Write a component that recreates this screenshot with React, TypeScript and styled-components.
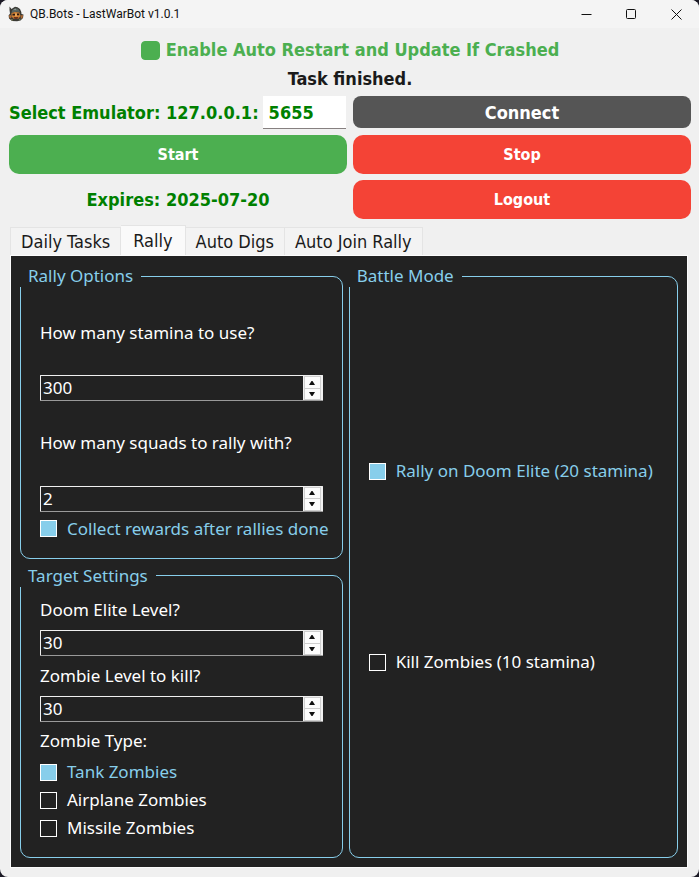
import React, { useId, useState } from "react";
import styled, { createGlobalStyle } from "styled-components";

const GlobalStyle = createGlobalStyle`
  * { box-sizing: border-box; }
  body { margin: 0; background: #1c1a26; }
  body, button, input { font-family: "DejaVu Sans Condensed", "DejaVu Sans", "Noto Sans", sans-serif; }
`;

const Window = styled.div`
  display: flex;
  flex-direction: column;
  min-height: 100vh;
  overflow: hidden;
  border-radius: 8px;
  background: #f0f0f0;
  color: #1a1a1a;
`;

const TitleBar = styled.header`
  display: flex;
  align-items: center;
  height: 28px;
  padding-left: 8px;
  background: #f4f4f4;
`;

const AppTitle = styled.h1`
  flex: 1;
  margin: 0 0 0 6px;
  font-family: Roboto, "Noto Sans", sans-serif;
  font-size: 12px;
  font-weight: 400;
  line-height: 16px;
  color: #111;
`;

const CaptionButton = styled.button`
  display: grid;
  place-items: center;
  width: 45px;
  height: 28px;
  padding: 0;
  border: 0;
  background: transparent;
  color: #111;
`;

const Content = styled.main`
  display: flex;
  flex: 1;
  flex-direction: column;
  gap: 6px;
  padding: 11px 8px 9px 9px;
`;

const RestartOption = styled.label`
  display: flex;
  align-items: center;
  justify-content: center;
  gap: 6px;
  font-size: 18px;
  font-weight: 700;
  line-height: 22px;
  color: #4caf50;
`;

const RestartBox = styled.input`
  appearance: none;
  width: 19px;
  height: 19px;
  margin: 0;
  border: 1px solid #4caf50;
  border-radius: 4px;
  background: #fff;
  &:checked { background: #4caf50; }
`;

const Status = styled.p`
  margin: 0;
  font-size: 18px;
  font-weight: 700;
  line-height: 23px;
  text-align: center;
`;

const Controls = styled.section`
  display: grid;
  grid-template-columns: repeat(2, minmax(0, 1fr));
  gap: 6px;
`;

const Emulator = styled.div`
  display: flex;
  align-items: center;
  gap: 4px;
  font-size: 18px;
  font-weight: 700;
  line-height: 23px;
  white-space: nowrap;
  color: #008000;
`;

const PortInput = styled.input`
  flex: 1;
  min-width: 0;
  height: 33px;
  margin-right: 1px;
  padding: 0 6px;
  border: 0;
  border-bottom: 1px solid #868080;
  background: #fff;
  color: #008000;
  font-size: 18px;
  font-weight: 700;
`;

const tones = { gray: "#555555", green: "#4caf50", red: "#f44336" };

const ActionButton = styled.button<{ $tone: keyof typeof tones; $compact?: boolean }>`
  height: ${(p) => (p.$compact ? 32 : 39)}px;
  padding: 0;
  border: 0;
  border-radius: ${(p) => (p.$compact ? 8 : 10)}px;
  background: ${(p) => tones[p.$tone]};
  color: #fff;
  font-size: ${(p) => (p.$compact ? 18 : 16)}px;
  font-weight: 700;
`;

const Expiry = styled.p`
  align-self: center;
  margin: 0;
  font-size: 18px;
  font-weight: 700;
  line-height: 23px;
  text-align: center;
  color: #008000;
`;

const TabArea = styled.section`
  display: flex;
  flex: 1;
  flex-direction: column;
  padding: 0 3px 0 1px;
`;

const TabList = styled.div`
  display: flex;
  align-items: flex-end;
  height: 30px;
`;

const Tab = styled.button<{ $active: boolean }>`
  height: ${(p) => (p.$active ? 30 : 28)}px;
  padding: ${(p) => (p.$active ? "0 12px" : "0 10px")};
  border: 1px solid #e4e4e4;
  border-bottom: 0;
  background: ${(p) => (p.$active ? "#fafafa" : "#f3f3f3")};
  color: #1a1a1a;
  font-size: 18px;
  line-height: 22px;
  white-space: nowrap;
  & + & { border-left: 0; }
`;

const Pane = styled.div`
  display: grid;
  flex: 1;
  grid-template-columns: 49fr 50fr;
  gap: 6px;
  padding: 9px;
  border: 1px solid #fcfcfc;
  background: #222;
  color: #fff;
  font-family: "Noto Sans", "Open Sans", sans-serif;
  font-size: 17px;
  line-height: 22px;
`;

const Column = styled.div`
  display: flex;
  flex-direction: column;
  gap: 6px;
  min-width: 0;
`;

const Group = styled.fieldset<{ $spread?: boolean }>`
  display: flex;
  flex: 1;
  flex-direction: column;
  justify-content: ${(p) => (p.$spread ? "space-evenly" : "flex-start")};
  gap: ${(p) => (p.$spread ? 0 : 6)}px;
  min-width: 0;
  margin: 0;
  padding: ${(p) => (p.$spread ? "4px 19px 15px" : "10px 19px 18px")};
  border: 1px solid #87ceeb;
  border-radius: 10px;
`;

const GroupTitle = styled.legend`
  margin-left: -20px;
  padding: 0 8px;
  background: #222;
  color: #87ceeb;
`;

const FieldLabel = styled.label`
  display: flex;
  flex: 1;
  align-items: center;
`;

const SpinFrame = styled.div`
  display: flex;
  height: 26px;
  border: 1px solid #f0f0f0;
  border-bottom-color: #9a9a9a;
  border-radius: 1px;
`;

const SpinInput = styled.input`
  flex: 1;
  min-width: 0;
  padding: 0 2px;
  border: 0;
  background: transparent;
  color: #fff;
  font: inherit;
  appearance: textfield;
  &::-webkit-inner-spin-button { appearance: none; margin: 0; }
`;

const SpinButtons = styled.div`
  display: flex;
  flex-direction: column;
  width: 19px;
  padding: 0 1px;
  background: #f0f0f0;
`;

const StepButton = styled.button`
  display: grid;
  flex: 1;
  place-items: center;
  padding: 0;
  border: 1px solid #cfcfcf;
  background: #fdfdfd;
  color: #111;
  & + & { border-top: 0; }
`;

const CheckLabel = styled.label<{ $checked: boolean }>`
  display: flex;
  align-items: center;
  gap: 10px;
  white-space: nowrap;
  color: ${(p) => (p.$checked ? "#87ceeb" : "#fff")};
`;

const CheckBox = styled.input`
  appearance: none;
  flex: none;
  width: 17px;
  height: 17px;
  margin: 0;
  border: 1px solid #fff;
  background: transparent;
  &:checked { background: #87ceeb; }
`;

function HelmetIcon() {
  return (
    <svg width="16" height="16" viewBox="0 0 16 16" aria-hidden="true">
      <path d="M1.500 .5 3.500 3 5 2 7 .8 9.500 1.200 12 3 13.300 6 13.500 8 15.500 8.500 15 12 12.500 14.500 9 15.300 4 15 1 12.500.600 9.500 2 7.500 1.500 4z" fill="#3a3a35" />
      <path d="M4 4.500 7 2.200 10 2.800 12 6 8 5.800 3.500 7z" fill="#59645f" />
      <path d="M5 3.800 7.500 2.600 8.500 4.300z" fill="#8a9490" />
      <path d="M3.500 7 7 6 11.500 6.500 12.500 10 10 13 6 13 3.500 10.500z" fill="#d08236" />
      <path d="M4.500 7.800h2.500v1.600H4.500zM9 7.600h2.200v1.600H9z" fill="#2a1a12" />
      <path d="M7.200 7.500h1.500v2.800H7.200z" fill="#f0b060" />
      <path d="M5.500 11h5l-1 2H6.500z" fill="#6b341c" />
      <path d="M.8 9.500 3 9 3.500 11.500 1.800 12.500zM12.500 9.500l2.500-.5-.5 3-1.500.8z" fill="#b06a34" />
      <path d="M3 13l2 .5v1.200L3 14zM11 13.200l1.500-.7v1.200L11 14.500z" fill="#7c7c50" />
    </svg>
  );
}

function Arrow({ down = false }: { down?: boolean }) {
  return (
    <svg width="6" height="4" viewBox="0 0 6 4" aria-hidden="true">
      <path d={down ? "M0 0H6L3.500 4H2.500z" : "M0 4H6L3.500 0H2.500z"} fill="currentColor" />
    </svg>
  );
}

function Spin({ label, initial }: { label: string; initial: number }) {
  const id = useId();
  const [value, setValue] = useState(initial);
  return (
    <>
      <FieldLabel htmlFor={id}>{label}</FieldLabel>
      <SpinFrame>
        <SpinInput id={id} type="number" value={value} onChange={(e) => setValue(Number(e.target.value))} />
        <SpinButtons>
          <StepButton type="button" aria-label="Increase" onClick={() => setValue(value + 1)}>
            <Arrow />
          </StepButton>
          <StepButton type="button" aria-label="Decrease" onClick={() => setValue(value - 1)}>
            <Arrow down />
          </StepButton>
        </SpinButtons>
      </SpinFrame>
    </>
  );
}

function Check({ label, initial = false }: { label: string; initial?: boolean }) {
  const [checked, setChecked] = useState(initial);
  return (
    <CheckLabel $checked={checked}>
      <CheckBox type="checkbox" checked={checked} onChange={(e) => setChecked(e.target.checked)} />
      {label}
    </CheckLabel>
  );
}

const tabs = ["Daily Tasks", "Rally", "Auto Digs", "Auto Join Rally"];

export default function App() {
  const [active, setActive] = useState("Rally");
  return (
    <>
      <GlobalStyle />
      <Window>
        <TitleBar>
          <HelmetIcon />
          <AppTitle>QB.Bots - LastWarBot v1.0.1</AppTitle>
          <CaptionButton aria-label="Minimize">
            <svg width="11" height="11" viewBox="0 0 11 11"><path d="M.5 5.500h10" stroke="currentColor" /></svg>
          </CaptionButton>
          <CaptionButton aria-label="Maximize">
            <svg width="11" height="11" viewBox="0 0 11 11"><rect x=".5" y=".5" width="9" height="9" rx="1" fill="none" stroke="currentColor" /></svg>
          </CaptionButton>
          <CaptionButton aria-label="Close">
            <svg width="11" height="11" viewBox="0 0 11 11"><path d="M.5.500l10 10M10.500.5l-10 10" stroke="currentColor" /></svg>
          </CaptionButton>
        </TitleBar>
        <Content>
          <RestartOption>
            <RestartBox type="checkbox" defaultChecked />
            Enable Auto Restart and Update If Crashed
          </RestartOption>
          <Status>Task finished.</Status>
          <Controls>
            <Emulator>
              <label htmlFor="port">Select Emulator: 127.0.0.1:</label>
              <PortInput id="port" defaultValue="5655" />
            </Emulator>
            <ActionButton $tone="gray" $compact>Connect</ActionButton>
            <ActionButton $tone="green">Start</ActionButton>
            <ActionButton $tone="red">Stop</ActionButton>
            <Expiry>Expires: 2025-07-20</Expiry>
            <ActionButton $tone="red">Logout</ActionButton>
          </Controls>
          <TabArea>
            <TabList role="tablist">
              {tabs.map((name) => (
                <Tab key={name} role="tab" aria-selected={name === active} $active={name === active} onClick={() => setActive(name)}>
                  {name}
                </Tab>
              ))}
            </TabList>
            <Pane role="tabpanel">
              <Column>
                <Group>
                  <GroupTitle>Rally Options</GroupTitle>
                  <Spin label="How many stamina to use?" initial={300} />
                  <Spin label="How many squads to rally with?" initial={2} />
                  <Check label="Collect rewards after rallies done" initial />
                </Group>
                <Group>
                  <GroupTitle>Target Settings</GroupTitle>
                  <Spin label="Doom Elite Level?" initial={30} />
                  <Spin label="Zombie Level to kill?" initial={30} />
                  <FieldLabel as="span">Zombie Type:</FieldLabel>
                  <Check label="Tank Zombies" initial />
                  <Check label="Airplane Zombies" />
                  <Check label="Missile Zombies" />
                </Group>
              </Column>
              <Column>
                <Group $spread>
                  <GroupTitle>Battle Mode</GroupTitle>
                  <Check label="Rally on Doom Elite (20 stamina)" initial />
                  <Check label="Kill Zombies (10 stamina)" />
                </Group>
              </Column>
            </Pane>
          </TabArea>
        </Content>
      </Window>
    </>
  );
}
